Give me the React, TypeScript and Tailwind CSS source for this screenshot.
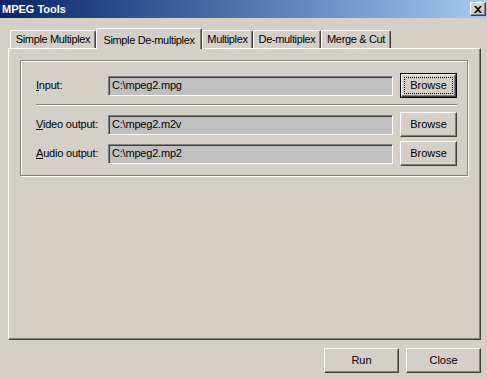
import React from "react";

const font = { fontFamily: '"Liberation Sans", Arial, sans-serif' };

const raised =
  "border border-t-white border-l-white border-b-[#404040] border-r-[#404040] shadow-[inset_-1px_-1px_0_#808080]";

function Tab({ label, w, active }: { label: string; w: string; active?: boolean }) {
  if (active) {
    return (
      <div
        className={`${w} h-[21px] -mb-px relative z-10 bg-[#d4d0c8] border-l border-t border-white border-r border-r-[#404040] rounded-tl-[2px] rounded-tr-[2px] shadow-[inset_-1px_0_0_#808080] flex items-start justify-center pt-[3px] text-[11px] tracking-[-0.35px] text-black`}
      >
        {label}
      </div>
    );
  }
  return (
    <div
      className={`${w} h-[18px] bg-[#d4d0c8] border-l border-t border-white border-r border-r-[#404040] rounded-tl-[2px] rounded-tr-[2px] shadow-[inset_-1px_0_0_#808080] flex items-center justify-center text-[11px] tracking-[-0.35px] text-black`}
    >
      {label}
    </div>
  );
}

function Field({ value }: { value: string }) {
  return (
    <div className="w-[285px] h-[20px] bg-[#c0c0c0] border border-t-[#808080] border-l-[#808080] border-b-white border-r-white shadow-[inset_1px_1px_0_#404040] flex items-center pl-[3px] text-[11px] tracking-[-0.2px] text-black">
      {value}
    </div>
  );
}

function Button({ label, w, def }: { label: string; w: string; def?: boolean }) {
  if (def) {
    return (
      <div className={`${w} h-[25px] border border-black`}>
        <div className={`w-full h-full ${raised} flex items-center justify-center p-[2px]`}>
          <div className="w-full h-full border border-dotted border-black flex items-center justify-center text-[11px] text-black">
            {label}
          </div>
        </div>
      </div>
    );
  }
  return (
    <div className={`${w} h-[25px] ${raised} flex items-center justify-center text-[11px] text-black`}>
      {label}
    </div>
  );
}

function Row({ label, u, value, def }: { label: string; u: string; value: string; def?: boolean }) {
  return (
    <div className="h-[25px] flex items-center">
      <div className="w-[72px] text-[11px] tracking-[-0.2px] text-black">
        <span className="underline">{u}</span>
        {label}
      </div>
      <Field value={value} />
      <div className="ml-[7px]">
        <Button label="Browse" w="w-[57px]" def={def} />
      </div>
    </div>
  );
}

export default function App() {
  return (
    <div className="w-[487px] h-[379px] bg-[#d4d0c8] flex flex-col overflow-hidden" style={font}>
      <div className="h-[18px] bg-gradient-to-r from-[#0a246a] to-[#a6caf0] flex items-center justify-between pl-[2px] pr-[1px]">
        <span className="text-white font-bold text-[11px] leading-none">MPEG Tools</span>
        <div className={`w-[16px] h-[14px] bg-[#d4d0c8] ${raised} flex items-center justify-center`}>
          <svg width="8" height="7" viewBox="0 0 8 7">
            <path d="M0 0h2l2 2 2-2h2L5 3.5 8 7H6L4 5 2 7H0l3-3.5z" fill="black" />
          </svg>
        </div>
      </div>

      <div className="pl-[8px] pt-[10px]">
        <div className="flex items-end pl-[2px]">
          <Tab label="Simple Multiplex" w="w-[86px]" />
          <Tab label="Simple De-multiplex" w="w-[106px]" active />
          <Tab label="Multiplex" w="w-[51px]" />
          <Tab label="De-multiplex" w="w-[68px]" />
          <Tab label="Merge & Cut" w="w-[70px]" />
        </div>

        <div className="w-[473px] h-[292px] border border-t-white border-l-white border-b-[#404040] border-r-[#404040] shadow-[inset_-1px_-1px_0_#808080] pt-[11px] pl-[11px]">
          <div className="w-[448px] h-[116px] border border-[#808080] shadow-[inset_1px_1px_0_white,1px_1px_0_white] pt-[12px] pl-[15px]">
            <Row label="nput:" u="I" value="C:\mpeg2.mpg" def />
            <div className="w-[421px] h-[2px] border-t border-t-[#808080] border-b border-b-white mt-[6px] mb-[6px]" />
            <Row label="ideo output:" u="V" value="C:\mpeg2.m2v" />
            <div className="h-[4px]" />
            <Row label="udio output:" u="A" value="C:\mpeg2.mp2" />
          </div>
        </div>
      </div>

      <div className="flex justify-end gap-[7px] pr-[6px] pt-[8px]">
        <Button label="Run" w="w-[75px]" />
        <Button label="Close" w="w-[75px]" />
      </div>
    </div>
  );
}
